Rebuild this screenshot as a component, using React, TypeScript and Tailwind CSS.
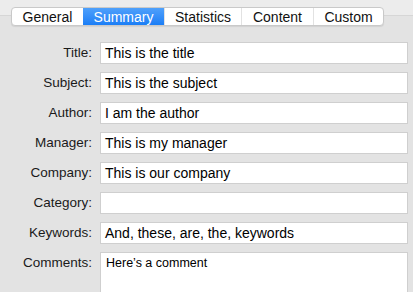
const tabs = ['General', 'Summary', 'Statistics', 'Content', 'Custom'];
const widths = ['w-[71px]', 'w-[81px]', 'w-[77px]', 'w-[72px]', 'w-[70px]'];

const fields: [string, string][] = [
  ['Title:', 'This is the title'],
  ['Subject:', 'This is the subject'],
  ['Author:', 'I am the author'],
  ['Manager:', 'This is my manager'],
  ['Company:', 'This is our company'],
  ['Category:', ''],
  ['Keywords:', 'And, these, are, the, keywords'],
];

export default function App() {
  return (
    <div className="w-[413px] h-[292px] overflow-hidden bg-[#e3e3e3] font-['Liberation_Sans',Arial,sans-serif] text-[#1a1a1a]">
      <div className="h-[16px] bg-[#ececec] border-b border-[#d6d6d6]" />
      <div className="relative z-10 -mt-[9px] ml-[11px] flex h-[19px] w-fit rounded-[4px] border border-[#c9c9c9] bg-white shadow-[0_1px_1px_rgba(0,0,0,0.08)] overflow-hidden">
        {tabs.map((t, i) => (
          <div
            key={t}
            className={`${widths[i]} flex items-center justify-center text-[14px] leading-none ${
              i === 1
                ? 'bg-gradient-to-b from-[#4ea0fb] to-[#1a7ef6] text-white'
                : 'text-[#111]'
            } ${i > 1 ? 'border-l border-[#e2e2e2]' : ''}`}
          >
            {t}
          </div>
        ))}
      </div>
      <div className="mt-[16px] grid grid-cols-[92px_308px] gap-x-[8px] gap-y-[8px]">
        {fields.map(([label, value]) => (
          <div key={label} className="contents">
            <div className="h-[22px] flex items-center justify-end text-[13.5px]">{label}</div>
            <div className="h-[22px] flex items-center bg-white border border-[#cfcfcf] pl-[4px] text-[14px] text-black">
              {value}
            </div>
          </div>
        ))}
        <div className="h-[22px] flex items-center justify-end text-[13.5px]">Comments:</div>
        <div className="h-[60px] bg-white border border-[#cfcfcf] pl-[5px] pt-[1px] text-[12.5px] text-black">
          Here’s a comment
        </div>
      </div>
    </div>
  );
}
